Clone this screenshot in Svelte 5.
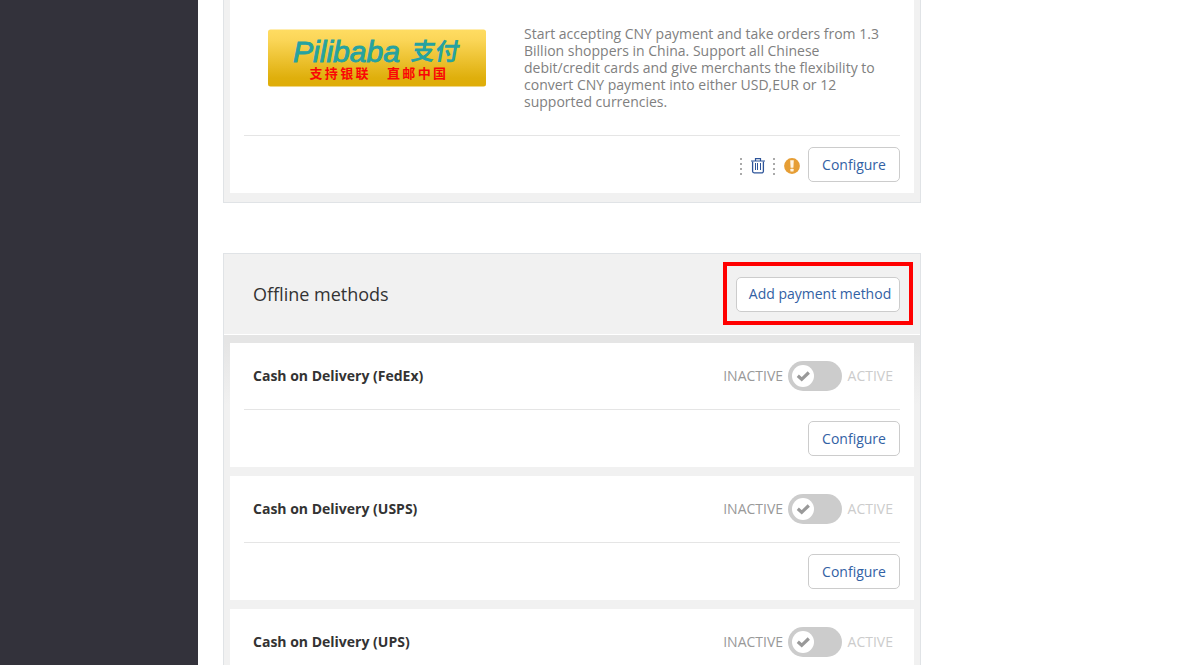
<script>
  const methods = ['Cash on Delivery (FedEx)', 'Cash on Delivery (USPS)', 'Cash on Delivery (UPS)'];
</script>

<div class="page">
  <aside></aside>
  <main>
    <section class="panel online">
      <article class="card provider">
        <div class="details">
          <svg class="logo" width="218" height="58" viewBox="0 0 218 58">
            <defs>
              <linearGradient id="gold" x1="0" y1="0" x2="0" y2="1">
                <stop offset="0" stop-color="#ffdc62" />
                <stop offset="0.18" stop-color="#fbd658" />
                <stop offset="0.85" stop-color="#dfaf0c" />
                <stop offset="1" stop-color="#dfad08" />
              </linearGradient>
            </defs>
            <rect x="0" y="0.5" width="218" height="57" rx="2.5" fill="url(#gold)" />
            <text class="brand" x="25" y="33" textLength="107" lengthAdjust="spacingAndGlyphs">Pilibaba</text>
            <text class="brand-cn" transform="translate(142 30.5) skewX(-10)" textLength="48" lengthAdjust="spacingAndGlyphs">支付</text>
            <text class="tagline" x="41.5" y="49" textLength="59">支持银联</text>
            <text class="tagline" x="119" y="49" textLength="59">直邮中国</text>
          </svg>
          <p>Start accepting CNY payment and take orders from 1.3 Billion shoppers in China. Support all Chinese debit/credit cards and give merchants the flexibility to convert CNY payment into either USD,EUR or 12 supported currencies.</p>
        </div>
        <div class="actions">
          <span class="dots"></span>
          <svg class="trash" width="14" height="16" viewBox="0 0 14 16" fill="none" stroke="#2d5499">
            <path d="M0 3H14M4.5 2.6V0.6H9.5V2.6" stroke-width="1.2" />
            <path d="M1.6 3.4V13.3Q1.6 14.8 3.1 14.8H10.9Q12.4 14.8 12.4 13.3V3.4" stroke-width="1.3" />
            <path d="M4.5 5V12M6.5 5V12M9.5 5V12" />
          </svg>
          <span class="dots"></span>
          <svg class="warn" width="16" height="16" viewBox="0 0 16 16">
            <circle cx="8" cy="8" r="7.9" fill="#e69e35" />
            <path d="M6.2 2.3H9.8L9.4 9.7H6.6Z" fill="#fff4e2" />
            <rect x="6.4" y="10.7" width="3.2" height="2.8" rx="0.6" fill="#fff4e2" />
          </svg>
          <button>Configure</button>
        </div>
      </article>
    </section>

    <section class="panel offline">
      <header>
        <h2>Offline methods</h2>
        <div class="highlight"><button>Add payment method</button></div>
      </header>
      <div class="list">
        {#each methods as name}
          <article class="card">
            <div class="method">
              <h3>{name}</h3>
              <span class="state">INACTIVE</span>
              <span class="switch">
                <span class="knob">
                  <svg width="14" height="12" viewBox="0 0 14 12" fill="none" stroke="#999" stroke-width="3.2">
                    <path d="M1.8 5.8L5.7 9.3L12.8 2.5" />
                  </svg>
                </span>
              </span>
              <span class="state on">ACTIVE</span>
            </div>
            <div class="actions"><button>Configure</button></div>
          </article>
        {/each}
      </div>
    </section>
  </main>
</div>

<style>
  :global(body) { overflow: hidden; background: #fff; }
  .page {
    display: flex;
    height: 665px;
    overflow: hidden;
    font: 14px/17px "Open Sans", sans-serif;
    color: #333;
  }
  aside { width: 198px; flex: none; background: #33323b; }
  main { width: 698px; margin-left: 25px; flex: none; }
  .panel { box-sizing: border-box; background: #f1f1f1; border: 1px solid #e0e3e6; }
  .online { height: 203px; border-top: 0; padding: 0 6px 9px; }
  .card { box-sizing: border-box; background: #fff; height: 124px; padding: 0 14px; }
  .provider { height: 193px; }
  .details {
    display: flex;
    align-items: flex-start;
    height: 135px;
    box-sizing: border-box;
    padding: 25px 0 0 24px;
  }
  .logo { display: block; flex: none; margin-top: 4px; }
  .brand { font: italic 29px "Liberation Sans", sans-serif; fill: #26a2a0; stroke: #26a2a0; stroke-width: 0.9; }
  .brand-cn { font: 700 24px "Noto Sans CJK SC", sans-serif; fill: #26a2a0; }
  .tagline { font: 700 13px "Noto Sans CJK SC", sans-serif; fill: #fa0606; }
  p { margin: 0 0 0 38px; width: 362px; color: #808080; }
  .actions {
    display: flex;
    justify-content: flex-end;
    align-items: center;
    box-sizing: border-box;
    height: 58px;
    border-top: 1px solid #e5e5e5;
  }
  button {
    box-sizing: border-box;
    width: 92px;
    height: 35px;
    padding: 0;
    border: 1px solid #ccc;
    border-radius: 5px;
    background: #fff;
    color: #3261a4;
    font: 14px/17px "Open Sans", sans-serif;
  }
  .dots {
    width: 2px;
    height: 17px;
    margin-top: 3px;
    background: repeating-linear-gradient(to bottom, #aaa 0 2px, transparent 2px 5px);
  }
  .trash { margin: 2px 8px 0 9px; }
  .warn { margin: 2px 8px 0 9px; }
  .offline { margin-top: 50px; height: 500px; }
  header {
    display: flex;
    justify-content: space-between;
    box-sizing: border-box;
    height: 81px;
    padding: 8px 7px 0 29px;
    border-bottom: 1px solid #fff;
  }
  h2 { margin: 20px 0 0; font-size: 18px; line-height: 25px; font-weight: 400; }
  .highlight { box-sizing: border-box; width: 190px; height: 63px; border: 4px solid #f00; padding: 11px 9px; }
  .highlight button { width: 164px; padding: 0 0 2px 4px; }
  .list {
    display: flex;
    flex-direction: column;
    gap: 9px;
    padding: 8px 6px 0;
    background: linear-gradient(#e5e5e5 0, #e5e5e5 8px, #f1f1f1 70px);
  }
  .method { display: flex; align-items: center; height: 66px; padding: 0 7px 0 9px; }
  h3 { flex: 1; margin: 0; padding-bottom: 2px; font-size: 14px; line-height: 17px; font-weight: 700; }
  .state { padding-bottom: 2px; color: #999; }
  .on { color: #ccc; }
  .switch {
    display: flex;
    align-items: center;
    box-sizing: border-box;
    width: 54px;
    height: 30px;
    margin: 0 6px 0 4.5px;
    padding-left: 4px;
    border-radius: 15px;
    background: #ccc;
  }
  .knob { display: flex; align-items: center; justify-content: center; width: 22px; height: 22px; border-radius: 50%; background: #fff; }
</style>
